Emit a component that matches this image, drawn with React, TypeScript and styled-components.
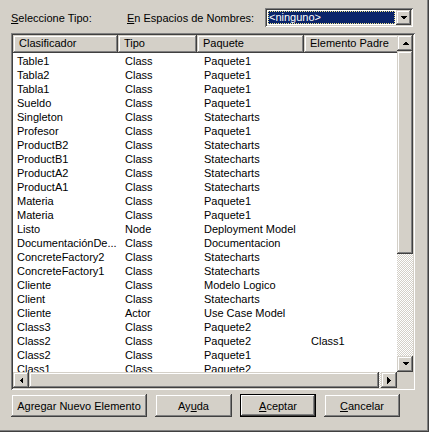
import React, { FC } from "react";
import styled, { createGlobalStyle, css } from "styled-components";

const face = "#d4d0c8";
const shadow = "#808080";
const darkShadow = "#404040";
const highlight = "#ffffff";

const GlobalStyle = createGlobalStyle`
    html, body {
        margin: 0;
        padding: 0;
        background: ${face};
    }
    body {
        font-family: "Liberation Sans", Arial, sans-serif;
        font-size: 11px;
        color: #000;
    }
`;

const raised = css`
    box-shadow:
        inset -1px -1px ${darkShadow},
        inset 1px 1px ${face},
        inset -2px -2px ${shadow},
        inset 2px 2px ${highlight};
`;

const sunken = css`
    box-shadow:
        inset 1px 1px ${shadow},
        inset -1px -1px ${highlight},
        inset 2px 2px ${darkShadow},
        inset -2px -2px ${face};
`;

const checker = css`
    background-color: ${face};
    background-image: conic-gradient(${highlight} 25%, ${face} 0 50%, ${highlight} 0 75%, ${face} 0);
    background-size: 2px 2px;
`;

const Dialog = styled.div`
    width: 429px;
    height: 432px;
    box-sizing: border-box;
    padding: 8px 16px 0 11px;
    display: flex;
    flex-direction: column;
    background: ${face};
    box-shadow: inset -1px -1px ${darkShadow}, inset -2px -2px ${shadow};
`;

const TopBar = styled.div`
    display: flex;
    align-items: center;
    height: 19px;
`;

const Label = styled.span<{ width: number }>`
    width: ${({ width }) => width}px;
    white-space: nowrap;
`;

const Combo = styled.div`
    margin-left: auto;
    width: 148px;
    height: 19px;
    box-sizing: border-box;
    padding: 2px;
    background: ${highlight};
    display: flex;
    ${sunken};
`;

const ComboValue = styled.div`
    flex: 1;
    margin: 1px;
    padding-left: 1px;
    background: #0a246a;
    color: #fff;
    line-height: 13px;
    outline: 1px dotted #f0e68c;
    outline-offset: -1px;
`;

const ArrowButton = styled.div<{ w?: number; h?: number }>`
    width: ${({ w }) => w ?? 16}px;
    height: ${({ h }) => h ?? 16}px;
    flex: none;
    display: flex;
    align-items: center;
    justify-content: center;
    background: ${face};
    ${raised};
`;

const ListFrame = styled.div`
    margin-top: 6px;
    width: 404px;
    height: 357px;
    box-sizing: border-box;
    padding: 2px;
    background: ${highlight};
    display: grid;
    grid-template-columns: 384px 16px;
    grid-template-rows: 337px 16px;
    ${sunken};
`;

const ListArea = styled.div`
    overflow: hidden;
    background: ${highlight};
`;

const columns = "105px 79px 107px 120px";

const HeaderRow = styled.div`
    display: grid;
    grid-template-columns: ${columns};
    height: 18px;
`;

const HeaderCell = styled.div`
    padding-left: 6px;
    line-height: 17px;
    white-space: nowrap;
    overflow: hidden;
    background: ${face};
    ${raised};
`;

const Rows = styled.div`
    padding-top: 1px;
`;

const Row = styled.div`
    display: grid;
    grid-template-columns: ${columns};
    height: 14px;
    line-height: 14px;
`;

const Cell = styled.div<{ first?: boolean }>`
    padding-left: ${({ first }) => (first ? 4 : 7)}px;
    white-space: nowrap;
    overflow: hidden;
`;

const VScroll = styled.div`
    display: flex;
    flex-direction: column;
`;

const HScroll = styled.div`
    display: flex;
`;

const Thumb = styled.div<{ size: number; vertical?: boolean }>`
    ${({ size, vertical }) => (vertical ? `height: ${size}px;` : `width: ${size}px;`)}
    flex: none;
    background: ${face};
    ${raised};
`;

const Track = styled.div`
    flex: 1;
    ${checker};
`;

const Corner = styled.div`
    background: ${face};
`;

const ButtonBar = styled.div`
    display: flex;
    gap: 8px;
    margin-top: 4px;
`;

const Button = styled.div<{ width: number; isDefault?: boolean }>`
    width: ${({ width }) => width}px;
    height: 23px;
    box-sizing: border-box;
    display: flex;
    align-items: center;
    justify-content: center;
    background: ${face};
    ${raised};
    ${({ isDefault }) => isDefault && css`
        box-shadow:
            inset 0 0 0 1px #000,
            inset -2px -2px ${darkShadow},
            inset 2px 2px ${highlight},
            inset -3px -3px ${shadow};
    `}
`;

const Key = styled.span`
    text-decoration: underline;
`;

type Dir = "up" | "down" | "left" | "right";

const Arrow: FC<{ dir: Dir }> = ({ dir }) => {
    const points = {
        up: "0,4 7,4 3.5,0.5",
        down: "0,0 7,0 3.5,3.5",
        left: "4,0 4,7 0.5,3.5",
        right: "0,0 0,7 3.5,3.5",
    }[dir];
    const vertical = dir === "up" || dir === "down";
    return (
        <svg width={vertical ? 7 : 4} height={vertical ? 4 : 7} viewBox={vertical ? "0 0 7 4" : "0 0 4 7"}>
            <polygon points={points} fill="#000" shapeRendering="crispEdges" />
        </svg>
    );
};

type Entry = [string, string, string, string?];

const entries: Entry[] = [
    ["Table1", "Class", "Paquete1"],
    ["Tabla2", "Class", "Paquete1"],
    ["Tabla1", "Class", "Paquete1"],
    ["Sueldo", "Class", "Paquete1"],
    ["Singleton", "Class", "Statecharts"],
    ["Profesor", "Class", "Paquete1"],
    ["ProductB2", "Class", "Statecharts"],
    ["ProductB1", "Class", "Statecharts"],
    ["ProductA2", "Class", "Statecharts"],
    ["ProductA1", "Class", "Statecharts"],
    ["Materia", "Class", "Paquete1"],
    ["Materia", "Class", "Paquete1"],
    ["Listo", "Node", "Deployment Model"],
    ["DocumentaciónDe...", "Class", "Documentacion"],
    ["ConcreteFactory2", "Class", "Statecharts"],
    ["ConcreteFactory1", "Class", "Statecharts"],
    ["Cliente", "Class", "Modelo Logico"],
    ["Client", "Class", "Statecharts"],
    ["Cliente", "Actor", "Use Case Model"],
    ["Class3", "Class", "Paquete2"],
    ["Class2", "Class", "Paquete2", "Class1"],
    ["Class2", "Class", "Paquete1"],
    ["Class1", "Class", "Paquete2"],
];

const App: FC = () => (
    <>
        <GlobalStyle />
        <Dialog>
            <TopBar>
                <Label width={116}><Key>S</Key>eleccione Tipo:</Label>
                <Label width={130}><Key>E</Key>n Espacios de Nombres:</Label>
                <Combo>
                    <ComboValue>&lt;ninguno&gt;</ComboValue>
                    <ArrowButton w={15} h={15}><Arrow dir="down" /></ArrowButton>
                </Combo>
            </TopBar>
            <ListFrame>
                <ListArea>
                    <HeaderRow>
                        <HeaderCell>Clasificador</HeaderCell>
                        <HeaderCell>Tipo</HeaderCell>
                        <HeaderCell>Paquete</HeaderCell>
                        <HeaderCell>Elemento Padre</HeaderCell>
                    </HeaderRow>
                    <Rows>
                        {entries.map(([name, type, pkg, parent], i) => (
                            <Row key={i}>
                                <Cell first>{name}</Cell>
                                <Cell>{type}</Cell>
                                <Cell>{pkg}</Cell>
                                <Cell>{parent ?? ""}</Cell>
                            </Row>
                        ))}
                    </Rows>
                </ListArea>
                <VScroll>
                    <ArrowButton><Arrow dir="up" /></ArrowButton>
                    <Thumb vertical size={203} />
                    <Track />
                    <ArrowButton><Arrow dir="down" /></ArrowButton>
                </VScroll>
                <HScroll>
                    <ArrowButton><Arrow dir="left" /></ArrowButton>
                    <Thumb size={350} />
                    <Track />
                    <ArrowButton><Arrow dir="right" /></ArrowButton>
                </HScroll>
                <Corner />
            </ListFrame>
            <ButtonBar>
                <Button width={136}>Agregar Nuevo Elemento</Button>
                <Button width={77}>Ay<Key>u</Key>da</Button>
                <Button width={76} isDefault><Key>A</Key>ceptar</Button>
                <Button width={76}><Key>C</Key>ancelar</Button>
            </ButtonBar>
        </Dialog>
    </>
);

export default App;
